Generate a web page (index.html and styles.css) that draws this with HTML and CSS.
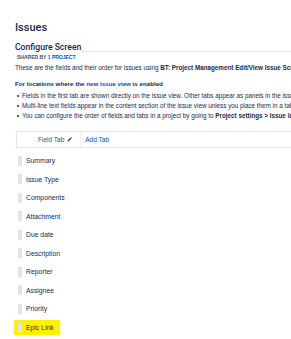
FILE: index.html
```html
<!DOCTYPE html>
<html>
<head>
<meta charset="utf-8">
<link rel="stylesheet" href="styles.css">
</head>
<body>
<div class="page">
  <h1 class="title">Issues</h1>
  <div class="head-row">
    <h2 class="subtitle">Configure Screen</h2>
    <div class="head-line"></div>
  </div>
  <div class="shared">SHARED BY <span class="link">1 PROJECT</span></div>
  <p class="intro">These are the fields and their order for issues using <b>BT: Project Management Edit/View Issue Screen</b></p>
  <p class="locations">For locations where the <span class="link">new issue view</span> is enabled</p>
  <ul class="bullets">
    <li>Fields in the first tab are shown directly on the issue view. Other tabs appear as panels in the issue view.</li>
    <li>Multi-line text fields appear in the content section of the issue view unless you place them in a tab.</li>
    <li>You can configure the order of fields and tabs in a project by going to <b>Project settings &gt; Issue layout</b></li>
  </ul>
  <div class="tabbar">
    <div class="tab active">Field Tab
      <svg class="pencil" viewBox="0 0 10 10" width="5" height="5"><path d="M1 9 L1.6 6.6 L6.8 1.4 L8.6 3.2 L3.4 8.4 Z" fill="#172b4d"/><path d="M7.4 0.8 L8.2 0 L10 1.8 L9.2 2.6 Z" fill="#172b4d"/></svg>
    </div>
    <div class="tab add">Add Tab</div>
  </div>
  <div class="fields">
    <div class="field"><span class="chip"><span class="handle"></span>Summary</span></div>
    <div class="field"><span class="chip"><span class="handle"></span>Issue Type</span></div>
    <div class="field"><span class="chip"><span class="handle"></span>Components</span></div>
    <div class="field"><span class="chip"><span class="handle"></span>Attachment</span></div>
    <div class="field"><span class="chip"><span class="handle"></span>Due date</span></div>
    <div class="field"><span class="chip"><span class="handle"></span>Description</span></div>
    <div class="field"><span class="chip"><span class="handle"></span>Reporter</span></div>
    <div class="field"><span class="chip"><span class="handle"></span>Assignee</span></div>
    <div class="field"><span class="chip"><span class="handle"></span>Priority</span></div>
    <div class="field"><span class="chip highlight"><span class="handle"></span>Epic Link</span></div>
  </div>
</div>
</body>
</html>
```
FILE: styles.css
```css
html, body {
  margin: 0;
  padding: 0;
  background: #ffffff;
  overflow: hidden;
}
body {
  font-family: "Liberation Sans", Arial, sans-serif;
  color: #172b4d;
}
.page {
  padding-left: 15px;
  width: 291px;
  box-sizing: border-box;
  overflow: hidden;
}
.title {
  margin: 22px 0 0 0;
  font-family: Roboto, "Liberation Sans", sans-serif;
  font-size: 11px;
  line-height: 12px;
  font-weight: 500;
}
.head-row {
  display: flex;
  align-items: flex-end;
  margin-top: 8px;
  height: 10px;
}
.subtitle {
  margin: 0;
  font-family: Roboto, "Liberation Sans", sans-serif;
  font-size: 8.6px;
  line-height: 10px;
  font-weight: 500;
  white-space: nowrap;
}
.head-line {
  flex: 1;
  border-bottom: 1px solid #e4e6ea;
  margin-left: 1px;
}
.shared {
  margin-top: 2px;
  padding-left: 2px;
  font-size: 5px;
  line-height: 6px;
  font-weight: 700;
  color: #42526e;
  white-space: nowrap;
}
.link {
  color: #0052cc;
}
.intro, .locations {
  margin: 0;
  font-size: 6.3px;
  line-height: 8px;
  white-space: nowrap;
}
.intro {
  margin-top: 4px;
}
.locations {
  margin-top: 8px;
  font-weight: 700;
  font-size: 6.2px;
}
.bullets {
  margin: 3px 0 0 0;
  padding: 0 0 0 7px;
  list-style: none;
  font-size: 6.3px;
  line-height: 10px;
  white-space: nowrap;
}
.bullets li {
  position: relative;
}
.bullets li::before {
  content: "";
  position: absolute;
  left: -5px;
  top: 4px;
  width: 2px;
  height: 2px;
  border-radius: 50%;
  background: #172b4d;
}
.tabbar {
  margin-top: 10px;
  display: flex;
  height: 15px;
  border-top: 1px solid #e4e6ea;
  border-bottom: 1px solid #e4e6ea;
  margin-right: -20px;
  padding-left: 1px;
  font-size: 6.5px;
}
.tab {
  display: flex;
  align-items: center;
  white-space: nowrap;
}
.tab.active {
  padding: 0 8px 0 21px;
  border-left: 1px solid #e4e6ea;
  border-right: 1px solid #eef0f2;
  color: #42526e;
  gap: 3px;
}
.pencil {
  display: block;
}
.tab.add {
  padding-left: 4px;
  color: #0052cc;
}
.fields {
  margin-top: 3.5px;
  margin-left: -1px;
}
.field {
  height: 18.5px;
  display: flex;
  align-items: center;
}
.chip {
  display: inline-flex;
  align-items: center;
  height: 15px;
  padding: 0 6px 0 4px;
  gap: 4px;
  font-size: 6.8px;
  white-space: nowrap;
  color: #172b4d;
}
.handle {
  width: 4px;
  height: 10px;
  background: #e2e4e8;
}
.highlight {
  background: #fff200;
}
```
